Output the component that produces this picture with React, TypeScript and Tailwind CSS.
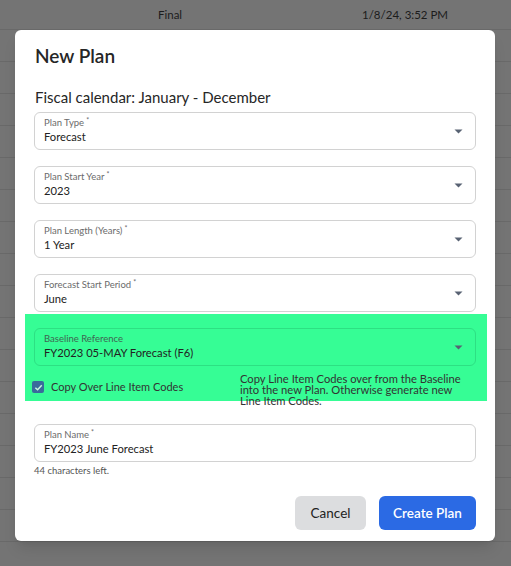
import React from 'react';

const Caret: React.FC = () => (
  <svg width="9" height="5" viewBox="0 0 9 5" className="shrink-0 mr-px">
    <path d="M0.5 0.5 L8.5 0.5 L4.5 4.6 Z" fill="#586273" />
  </svg>
);

type FieldProps = {
  label: string;
  value: string;
  required?: boolean;
  select?: boolean;
  labelClass?: string;
  borderClass?: string;
};

const Field: React.FC<FieldProps> = ({
  label,
  value,
  required = true,
  select = true,
  labelClass = 'text-[#6b6b6b]',
  borderClass = 'border-[#d2d2d2]',
}) => (
  <div className={`h-[38px] rounded-md border ${borderClass} flex items-center pl-[9px] pr-[11px]`}>
    <div className="flex-1 flex flex-col">
      <span className={`text-[9.5px] leading-[12px] ${labelClass}`}>
        {label}
        {required && <span className="relative -top-[3px] ml-[2px] text-[7px]">*</span>}
      </span>
      <span className="text-[11.2px] leading-4 text-[#222]">{value}</span>
    </div>
    {select && <Caret />}
  </div>
);

const App: React.FC = () => {
  const rows = Array.from({ length: 17 });
  return (
    <div className="relative h-[566px] w-[511px] overflow-hidden bg-[#747474] font-['Lato','Noto_Sans',sans-serif]">
      {/* table behind the overlay */}
      <div className="flex flex-col">
        <div className="h-[30px] border-b border-[#696969] flex items-center text-[11.5px] text-[#1c1c1c]">
          <span className="pl-[158px] w-[362px]">Final</span>
          <span>1/8/24, 3:52 PM</span>
        </div>
        {rows.map((_, i) => (
          <div key={i} className="h-8 border-b border-[#696969]" />
        ))}
      </div>

      {/* dialog */}
      <div className="absolute left-[15px] top-[30px] w-[480px] h-[511px] bg-white rounded-md shadow-lg flex flex-col px-[19px] pt-3 pb-[11px]">
        <h1 className="text-[19px] leading-7 font-semibold text-[#262626] pl-px">New Plan</h1>
        <p className="mt-[15px] text-[15px] leading-6 text-[#262626] pl-px">Fiscal calendar: January - December</p>

        <div className="mt-[3px] flex flex-col gap-4">
          <Field label="Plan Type" value="Forecast" />
          <Field label="Plan Start Year" value="2023" />
          <Field label="Plan Length (Years)" value="1 Year" />
          <Field label="Forecast Start Period" value="June" />
        </div>

        <div className="mt-[2px] -ml-[9px] -mr-[11px] pl-[9px] pr-[11px] pt-[14px] h-[87px] bg-[#36fd95]">
          <Field
            label="Baseline Reference"
            value="FY2023 05-MAY Forecast (F6)"
            required={false}
            labelClass="text-[#3f6652]"
            borderClass="border-[#2de083]"
          />
          <div className="mt-[7px] flex items-start">
            <div className="w-[208px] flex items-center gap-[7px] -ml-[2px] pt-[6px]">
              <span className="w-3 h-3 rounded-[2px] bg-[#3a6b9c] flex items-center justify-center">
                <svg width="9" height="9" viewBox="0 0 10 10">
                  <path d="M1.5 5.2 L4 7.6 L8.6 2.6" fill="none" stroke="#c9f7df" strokeWidth="1.6" />
                </svg>
              </span>
              <span className="text-[11px] leading-4 text-[#333]">Copy Over Line Item Codes</span>
            </div>
            <p className="w-[224px] text-[11.2px] leading-[11px] text-[#333]">
              Copy Line Item Codes over from the Baseline into the new Plan. Otherwise generate new Line Item Codes.
            </p>
          </div>
        </div>

        <div className="mt-[23px]">
          <Field label="Plan Name" value="FY2023 June Forecast" select={false} />
          <p className="mt-[3px] text-[9.5px] leading-3 text-[#555]">44 characters left.</p>
        </div>

        <div className="mt-auto flex justify-end gap-[13px]">
          <button className="h-[34px] w-[71px] rounded-md bg-[#dcdddf] text-[13.5px] text-[#222]">Cancel</button>
          <button className="h-[34px] w-[97px] rounded-md bg-[#2b6ae4] text-[13.5px] font-semibold text-white">
            Create Plan
          </button>
        </div>
      </div>
    </div>
  );
};

export default App;
